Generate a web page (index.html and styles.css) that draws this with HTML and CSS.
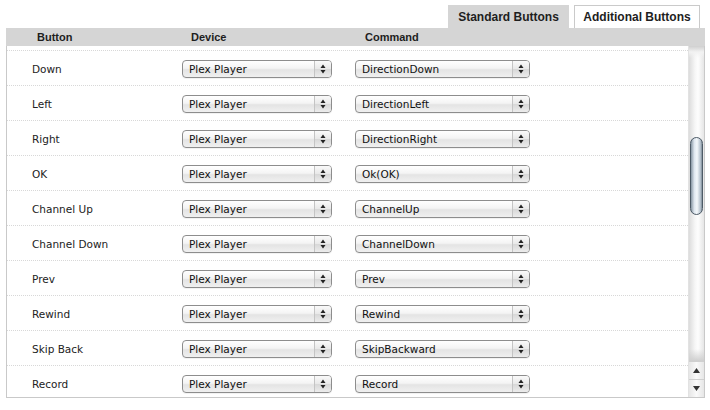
FILE: index.html
```html
<!DOCTYPE html>
<html>
<head>
<meta charset="utf-8">
<link rel="stylesheet" href="styles.css">
</head>
<body>
<div class="tabs">
  <div class="tab tab-active">Standard Buttons</div>
  <div class="tab tab-other">Additional Buttons</div>
</div>
<div class="panel">
  <div class="head">
    <span class="h-btn">Button</span>
    <span class="h-dev">Device</span>
    <span class="h-cmd">Command</span>
  </div>
  <div class="body">
    <div class="list">
      <div class="row"><span class="lbl">Down</span><div class="sel dev"><span>Plex Player</span><i></i></div><div class="sel cmd"><span>DirectionDown</span><i></i></div></div>
      <div class="row"><span class="lbl">Left</span><div class="sel dev"><span>Plex Player</span><i></i></div><div class="sel cmd"><span>DirectionLeft</span><i></i></div></div>
      <div class="row"><span class="lbl">Right</span><div class="sel dev"><span>Plex Player</span><i></i></div><div class="sel cmd"><span>DirectionRight</span><i></i></div></div>
      <div class="row"><span class="lbl">OK</span><div class="sel dev"><span>Plex Player</span><i></i></div><div class="sel cmd"><span>Ok(OK)</span><i></i></div></div>
      <div class="row"><span class="lbl">Channel Up</span><div class="sel dev"><span>Plex Player</span><i></i></div><div class="sel cmd"><span>ChannelUp</span><i></i></div></div>
      <div class="row"><span class="lbl">Channel Down</span><div class="sel dev"><span>Plex Player</span><i></i></div><div class="sel cmd"><span>ChannelDown</span><i></i></div></div>
      <div class="row"><span class="lbl">Prev</span><div class="sel dev"><span>Plex Player</span><i></i></div><div class="sel cmd"><span>Prev</span><i></i></div></div>
      <div class="row"><span class="lbl">Rewind</span><div class="sel dev"><span>Plex Player</span><i></i></div><div class="sel cmd"><span>Rewind</span><i></i></div></div>
      <div class="row"><span class="lbl">Skip Back</span><div class="sel dev"><span>Plex Player</span><i></i></div><div class="sel cmd"><span>SkipBackward</span><i></i></div></div>
      <div class="row"><span class="lbl">Record</span><div class="sel dev"><span>Plex Player</span><i></i></div><div class="sel cmd"><span>Record</span><i></i></div></div>
    </div>
    <div class="scroll">
      <div class="sb-top"></div>
      <div class="sb-thumb"></div>
      <div class="sb-rest"></div>
      <div class="sb-arrow"><svg width="9" height="7" viewBox="0 0 9 7"><path d="M4.5 1 L8 6 L1 6 Z" fill="#333"/></svg></div>
      <div class="sb-arrow"><svg width="9" height="7" viewBox="0 0 9 7"><path d="M1 1 L8 1 L4.5 6 Z" fill="#333"/></svg></div>
    </div>
  </div>
</div>
</body>
</html>
```

FILE: styles.css
```css
html, body {
  margin: 0;
  padding: 0;
  background: #fff;
  font-family: "DejaVu Sans", "Liberation Sans", sans-serif;
  color: #1e1e1e;
}

.tabs {
  height: 28px;
  display: flex;
  justify-content: flex-end;
  align-items: flex-end;
  gap: 5px;
  padding-right: 10px;
}

.tab {
  height: 23px;
  box-sizing: border-box;
  font-family: "Liberation Sans", Arial, sans-serif;
  font-weight: bold;
  font-size: 12px;
  display: flex;
  align-items: center;
  justify-content: center;
}

.tab-active {
  width: 121px;
  background: #d5d5d5;
}

.tab-other {
  width: 126px;
  background: #fff;
  border: 1px solid #cacaca;
  border-bottom: none;
}

.panel {
  margin-left: 6px;
  width: 699px;
  box-sizing: border-box;
  border: 1px solid #c9c9c9;
  border-top: none;
}

.head {
  height: 18px;
  background: #d5d5d5;
  margin: 0 -1px;
  position: relative;
  font-family: "Liberation Sans", Arial, sans-serif;
  font-weight: bold;
  font-size: 11px;
  display: grid;
  grid-template-columns: 154px 174px 1fr;
  align-items: center;
  padding-left: 31px;
}

.body {
  display: flex;
  height: 351px;
  overflow: hidden;
}

.list {
  flex: 1;
  padding-top: 4px;
}

.row {
  height: 35px;
  box-sizing: border-box;
  border-top: 1px dotted #d8d8d8;
  display: grid;
  grid-template-columns: 152px 150px 175px;
  column-gap: 23px;
  align-items: center;
  padding-top: 1px;
  font-size: 10.5px;
}

.lbl {
  padding-left: 25px;
  color: #222;
}

.sel {
  height: 18px;
  box-sizing: border-box;
  border: 1px solid #8d8d8d;
  border-radius: 4px;
  background: linear-gradient(#ffffff, #f4f4f4 45%, #e4e4e4 55%, #f0f0f0);
  display: flex;
  align-items: center;
  box-shadow: 0 1px 0 rgba(0,0,0,0.05);
  color: #111;
}

.sel span {
  flex: 1;
  padding-left: 6px;
  white-space: nowrap;
  overflow: hidden;
}

.sel i {
  width: 16px;
  height: 16px;
  border-left: 1px solid #c4c4c4;
  background:
    url("data:image/svg+xml;utf8,<svg xmlns='http://www.w3.org/2000/svg' width='16' height='16'><path d='M8 3.5 L10.5 7 L5.5 7 Z' fill='%23222'/><path d='M5.5 9 L10.5 9 L8 12.5 Z' fill='%23222'/></svg>") center/16px 16px no-repeat,
    linear-gradient(#fafafa, #e8e8e8 50%, #d8d8d8 52%, #ececec);
  border-radius: 0 3px 3px 0;
}

.scroll {
  width: 15px;
  display: flex;
  flex-direction: column;
  background: linear-gradient(90deg, #dcdcdc, #f6f6f6 40%, #fdfdfd 60%, #e6e6e6);
  border-left: 1px solid #e2e2e2;
}

.sb-top {
  height: 91px;
  background: linear-gradient(#cfcfcf, #f2f2f2 6px, transparent 12px);
}

.sb-thumb {
  height: 78px;
  margin: 0 1px;
  box-sizing: border-box;
  border: 1px solid #4d5a66;
  border-radius: 7px;
  background: linear-gradient(90deg, #8796a3, #dfe7ef 30%, #f4f8fb 55%, #b8c4cf 85%, #7d8b97);
}

.sb-rest {
  flex: 1;
  background: linear-gradient(transparent calc(100% - 12px), #cfcfcf);
}

.sb-arrow {
  height: 17px;
  display: flex;
  align-items: center;
  justify-content: center;
  border-top: 1px solid #d0d0d0;
  background: linear-gradient(90deg, #e6e6e6, #fafafa 50%, #e6e6e6);
}
```
